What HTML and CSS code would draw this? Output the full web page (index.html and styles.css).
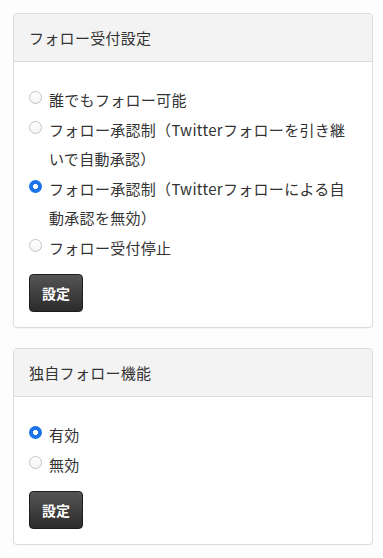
FILE: index.html
```html
<!DOCTYPE html>
<html lang="ja">
<head>
<meta charset="utf-8">
<link rel="stylesheet" href="styles.css">
</head>
<body>
<div class="page">
  <section class="panel">
    <div class="panel-head">フォロー受付設定</div>
    <form class="panel-body">
      <label class="opt"><input type="radio" name="f" class="radio"><span>誰でもフォロー可能</span></label>
      <label class="opt"><input type="radio" name="f" class="radio"><span>フォロー承認制（Twitterフォローを引き継いで自動承認）</span></label>
      <label class="opt"><input type="radio" name="f" class="radio" checked><span>フォロー承認制（Twitterフォローによる自動承認を無効）</span></label>
      <label class="opt"><input type="radio" name="f" class="radio"><span>フォロー受付停止</span></label>
      <button type="button" class="btn">設定</button>
    </form>
  </section>
  <section class="panel">
    <div class="panel-head">独自フォロー機能</div>
    <form class="panel-body">
      <label class="opt"><input type="radio" name="g" class="radio" checked><span>有効</span></label>
      <label class="opt"><input type="radio" name="g" class="radio"><span>無効</span></label>
      <button type="button" class="btn">設定</button>
    </form>
  </section>
</div>
</body>
</html>
```
FILE: styles.css
```css
html, body {
  margin: 0;
  padding: 0;
  background: #fdfdfd;
}
body {
  font-family: "Noto Sans CJK JP", "Noto Sans", sans-serif;
  color: #333;
  font-size: 15px;
}
.page {
  padding: 13px 10px 0 13px;
  display: flex;
  flex-direction: column;
  gap: 20px;
}
.panel {
  border: 1px solid #dcdcdc;
  border-radius: 4px;
  background: #fff;
  box-shadow: 0 1px 1px rgba(0,0,0,0.04);
  overflow: hidden;
}
.panel-head {
  height: 47px;
  line-height: 47px;
  padding: 0 15px;
  background: #f3f3f3;
  border-bottom: 1px solid #dcdcdc;
  letter-spacing: 0.3px;
}
.panel-body {
  margin: 0;
  padding: 23px 15px 15px 15px;
  display: flex;
  flex-direction: column;
  align-items: flex-start;
}
.opt {
  display: flex;
  align-items: flex-start;
  line-height: 29.5px;
  letter-spacing: 0.3px;
}
.radio {
  appearance: none;
  -webkit-appearance: none;
  flex: 0 0 auto;
  width: 13px;
  height: 13px;
  margin: 6px 7px 0 0;
  border-radius: 50%;
  border: 1px solid #c4c4c4;
  background: linear-gradient(#fff, #f4f4f4);
  box-sizing: border-box;
}
.radio:checked {
  border: none;
  background: radial-gradient(circle, #fff 0 2.3px, #1a73e8 2.8px);
}
.btn {
  margin-top: 12px;
  width: 54px;
  height: 38px;
  border: 1px solid #1e1e1e;
  border-radius: 4px;
  background: linear-gradient(#555, #2b2b2b);
  color: #fff;
  font-family: "Noto Sans CJK JP", sans-serif;
  font-weight: 700;
  font-size: 14px;
  padding: 0;
}
```
